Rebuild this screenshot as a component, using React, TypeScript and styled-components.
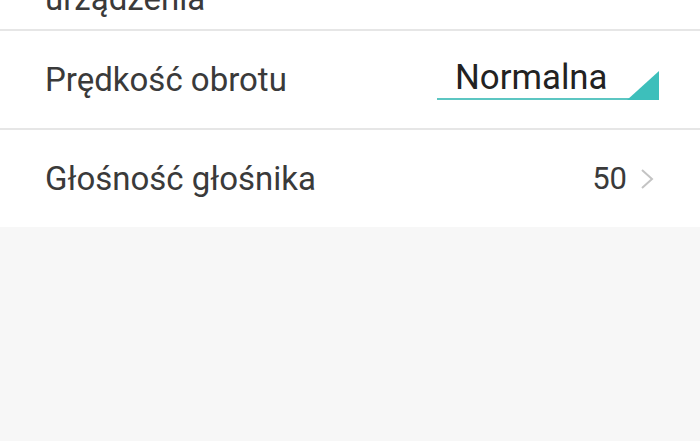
import React from "react";
import styled, { createGlobalStyle } from "styled-components";

const Global = createGlobalStyle`
  html, body { margin: 0; padding: 0; background: #f7f7f7; }
  body { font-family: Roboto, "Noto Sans", sans-serif; overflow: hidden; }
`;

const Page = styled.div`
  width: 700px;
  height: 441px;
  background: #f7f7f7;
  overflow: hidden;
`;

const List = styled.div`
  background: #ffffff;
  margin-top: -40px;
`;

const Row = styled.div<{ $h: number; $last?: boolean }>`
  height: ${(p) => p.$h}px;
  box-sizing: border-box;
  display: flex;
  align-items: center;
  justify-content: space-between;
  padding: 0 45px 0 45px;
  border-bottom: ${(p) => (p.$last ? "none" : "2px solid #e6e6e6")};
`;

const TopRow = styled(Row)`
  align-items: flex-end;
  padding-bottom: 11px;
`;

const Label = styled.span`
  font-size: 33px;
  color: #3a3a3a;
`;

const Spinner = styled.div`
  position: relative;
  width: 222px;
  height: 50px;
  display: flex;
  align-items: flex-end;
  padding-left: 18px;
  box-sizing: border-box;
  margin-right: -4px;
  margin-bottom: 10px;
`;

const SpinnerText = styled.span`
  font-size: 34.8px;
  color: #222222;
  line-height: 1;
  padding-bottom: 5px;
`;

const Underline = styled.div`
  position: absolute;
  left: 0;
  right: 0;
  bottom: 0;
  height: 2px;
  background: #5cc6c2;
`;

const Corner = styled.svg`
  position: absolute;
  right: 0;
  bottom: 0;
`;

const Value = styled.div`
  display: flex;
  align-items: center;
  gap: 12px;
`;

const ValueText = styled.span`
  font-size: 31px;
  color: #3a3a3a;
`;

export default function App() {
  return (
    <Page>
      <Global />
      <List>
        <TopRow $h={71}>
          <Label>urządzenia</Label>
        </TopRow>
        <Row $h={99}>
          <Label>Prędkość obrotu</Label>
          <Spinner>
            <SpinnerText>Normalna</SpinnerText>
            <Underline />
            <Corner width="32" height="29" viewBox="0 0 32 29">
              <polygon points="32,0 32,29 0,29" fill="#3dbfbb" />
            </Corner>
          </Spinner>
        </Row>
        <Row $h={97} $last>
          <Label>Głośność głośnika</Label>
          <Value>
            <ValueText>50</ValueText>
            <svg width="16" height="24" viewBox="0 0 16 24">
              <polyline points="3,3 13,12 3,21" fill="none" stroke="#c4c4c4" strokeWidth="2" />
            </svg>
          </Value>
        </Row>
      </List>
    </Page>
  );
}
